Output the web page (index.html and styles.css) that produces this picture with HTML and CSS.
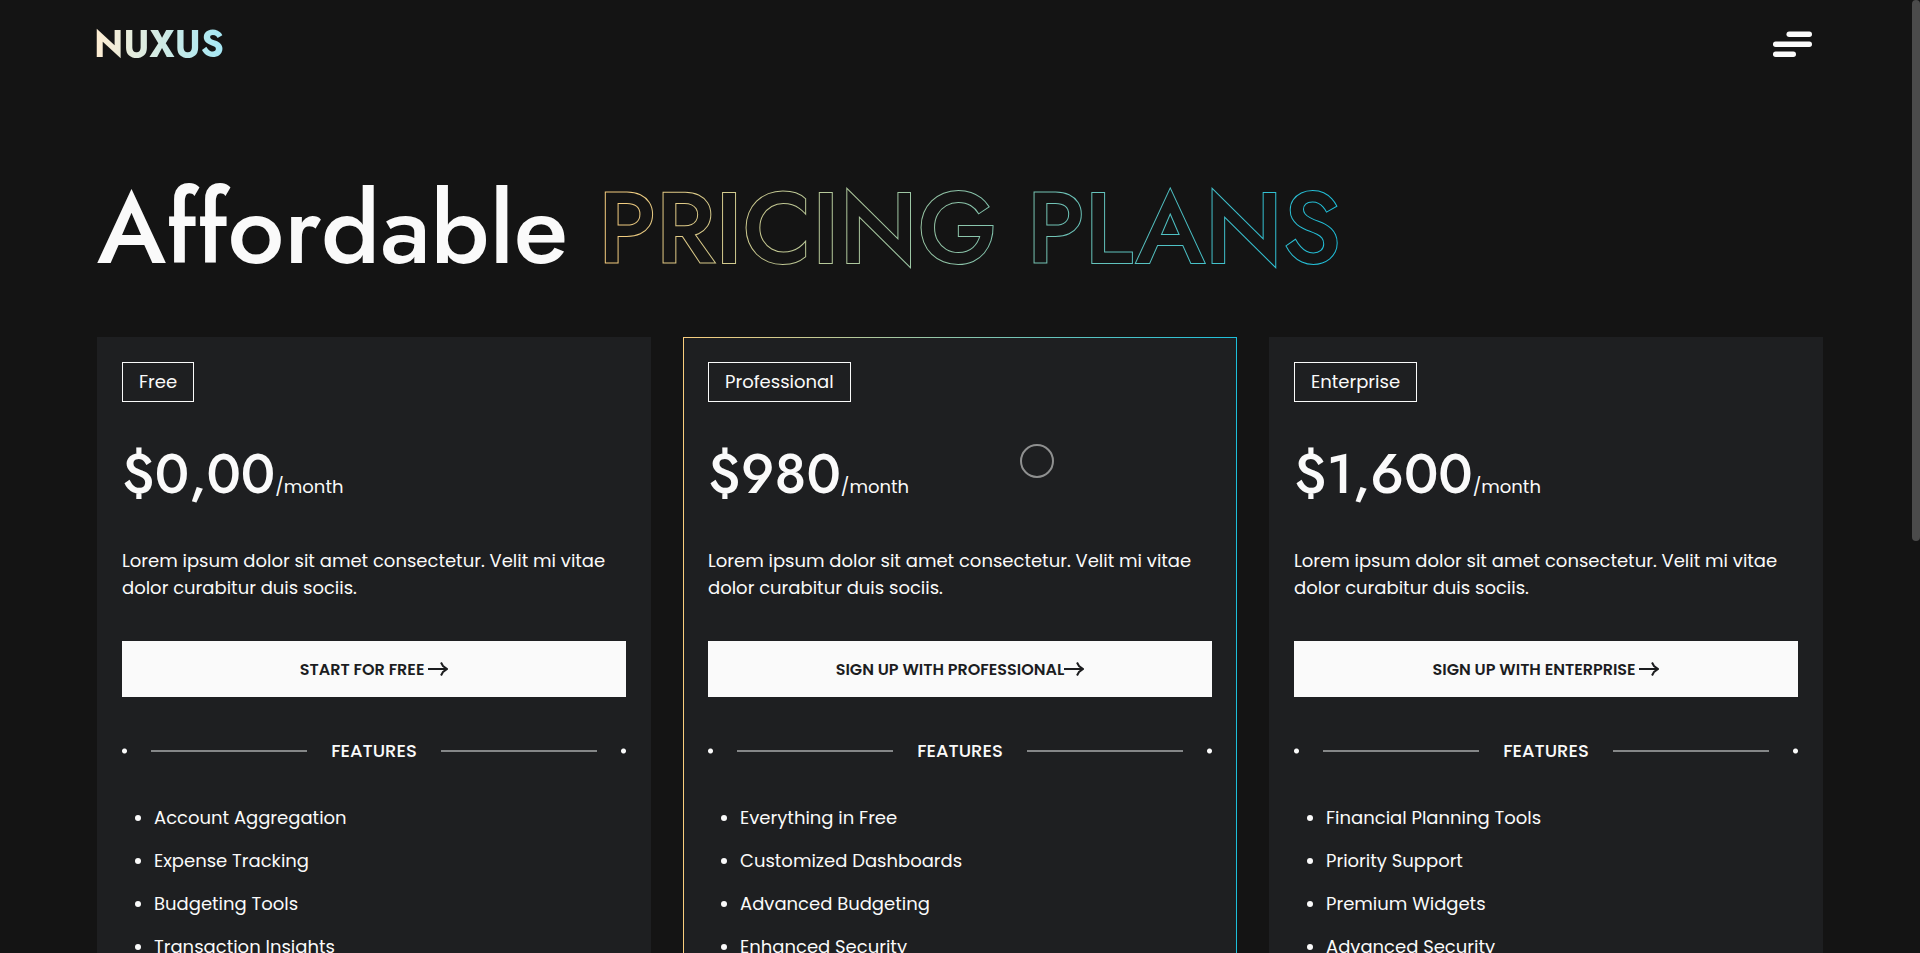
FILE: index.html
```html
<!DOCTYPE html>
<html lang="en">
<head>
<meta charset="utf-8">
<title>Nuxus – Pricing</title>
<link rel="stylesheet" href="styles.css">
</head>
<body>
<header class="header">
  <a class="logo" href="#">NUXUS</a>
  <button class="menu" type="button" aria-label="Open menu">
    <svg width="39" height="26" viewBox="0 0 39 26" aria-hidden="true">
      <rect x="13.500" y="0.500" width="25.500" height="5.500" rx="2.700"/>
      <rect x="0" y="10.500" width="39" height="5.500" rx="2.700"/>
      <rect x="0" y="20.500" width="23" height="5.500" rx="2.700"/>
    </svg>
  </button>
</header>

<main class="pricing">
  <h1 class="title">Affordable <span class="outline">PRICING PLANS</span></h1>
  <div class="plans">
    <section class="card">
      <h2 class="badge">Free</h2>
      <p class="price"><strong class="amount">$0,00</strong>/month</p>
      <p class="text">Lorem ipsum dolor sit amet consectetur. Velit mi vitae dolor curabitur duis sociis.</p>
      <a class="cta" href="#">START FOR FREE&nbsp;<svg class="arrow" viewBox="0 0 20 16" aria-hidden="true"><path d="M0 8H18M13 1.500L15 5L19 8L15 11L13 14.500"/></svg></a>
      <div class="divider"><span class="label">FEATURES</span></div>
      <ul class="features"><li>Account Aggregation</li><li>Expense Tracking</li><li>Budgeting Tools</li><li>Transaction Insights</li></ul>
    </section>
    <section class="card featured">
      <h2 class="badge">Professional</h2>
      <p class="price"><strong class="amount">$980</strong>/month</p>
      <p class="text">Lorem ipsum dolor sit amet consectetur. Velit mi vitae dolor curabitur duis sociis.</p>
      <a class="cta" href="#">SIGN UP WITH PROFESSIONAL<svg class="arrow" viewBox="0 0 20 16" aria-hidden="true"><path d="M0 8H18M13 1.500L15 5L19 8L15 11L13 14.500"/></svg></a>
      <div class="divider"><span class="label">FEATURES</span></div>
      <ul class="features"><li>Everything in Free</li><li>Customized Dashboards</li><li>Advanced Budgeting</li><li>Enhanced Security</li></ul>
    </section>
    <section class="card">
      <h2 class="badge">Enterprise</h2>
      <p class="price"><strong class="amount">$1,600</strong>/month</p>
      <p class="text">Lorem ipsum dolor sit amet consectetur. Velit mi vitae dolor curabitur duis sociis.</p>
      <a class="cta" href="#">SIGN UP WITH ENTERPRISE&nbsp;<svg class="arrow" viewBox="0 0 20 16" aria-hidden="true"><path d="M0 8H18M13 1.500L15 5L19 8L15 11L13 14.500"/></svg></a>
      <div class="divider"><span class="label">FEATURES</span></div>
      <ul class="features"><li>Financial Planning Tools</li><li>Priority Support</li><li>Premium Widgets</li><li>Advanced Security</li></ul>
    </section>
  </div>
</main>

<div class="cursor"></div>
<div class="scroll-thumb"></div>
</body>
</html>
```
FILE: styles.css
```css
:root {
  --bg: #141414;
  --panel: #1e1f21;
  --light: #fafafa;
  --sand: #f9cd7d;
  --aqua: #1dbfdb;
}
* { box-sizing: border-box; }
html { background: var(--bg); scrollbar-width: none; }
body {
  margin: 0;
  color: var(--light);
  font: 18px/27px Poppins, Inter, sans-serif;
}
h1, h2, p, ul { margin: 0; }
.header {
  display: flex;
  align-items: center;
  justify-content: space-between;
  height: 88px;
  padding: 0 108px 0 94px;
}
.logo {
  font: 700 37px/56px Jost, Lato, sans-serif;
  text-decoration: none;
  color: transparent;
  background: linear-gradient(90deg, #ffedd2, #a5e8f5);
  background-clip: text;
}
.menu {
  display: flex;
  padding: 0;
  border: 0;
  background: none;
  fill: var(--light);
}
.pricing { padding: 65px 97px 32px; }
.title {
  font: 500 100px/152px Jost, Lato, sans-serif;
  margin-bottom: 32px;
}
.outline {
  -webkit-text-fill-color: var(--bg);
  -webkit-text-stroke: 2px transparent;
  background: linear-gradient(90deg, var(--sand), var(--aqua));
  background-clip: text;
}
.plans {
  display: grid;
  grid-template-columns: repeat(3, 1fr);
  gap: 32px;
}
.card {
  display: flex;
  flex-direction: column;
  align-items: stretch;
  padding: 24px;
  border: 1px solid var(--panel);
  background: var(--panel);
}
.featured {
  border-image: linear-gradient(90deg, var(--sand), var(--aqua)) 1;
}
.badge {
  align-self: flex-start;
  padding: 0 16px;
  border: 1px solid var(--light);
  font-size: 18px;
  line-height: 38px;
  font-weight: 400;
}
.price { margin-top: 32px; line-height: 80px; }
.amount { font: 500 55px/80px Jost, Lato, sans-serif; }
.text { margin-top: 20px; }
.cta {
  display: flex;
  align-items: center;
  justify-content: center;
  height: 56px;
  margin-top: 40px;
  background: var(--light);
  color: #1c1d1f;
  font-size: 16px;
  font-weight: 600;
  text-decoration: none;
}
.arrow {
  width: 20px;
  height: 16px;
  fill: none;
  stroke: currentColor;
  stroke-width: 2;
}
.divider {
  display: flex;
  align-items: center;
  gap: 24px;
  margin-top: 40px;
}
.divider::before, .divider::after {
  content: "";
  flex: 1;
  height: 6px;
  background:
    radial-gradient(circle at 50% 50%, var(--light) 2px, transparent 3px) left / 5px 6px no-repeat,
    linear-gradient(#858788, #858788) right / calc(100% - 29px) 2px no-repeat;
}
.divider::after {
  background:
    radial-gradient(circle at 50% 50%, var(--light) 2px, transparent 3px) right / 5px 6px no-repeat,
    linear-gradient(#858788, #858788) left / calc(100% - 29px) 2px no-repeat;
}
.label { font-weight: 500; }
.features {
  display: flex;
  flex-direction: column;
  gap: 16px;
  margin-top: 40px;
  padding-left: 32px;
}
.cursor {
  position: fixed;
  left: 1020px;
  top: 444px;
  width: 34px;
  height: 34px;
  border: 2px solid #8f9090;
  border-radius: 50%;
  pointer-events: none;
}
.scroll-thumb {
  position: fixed;
  top: 0;
  right: 0;
  width: 8px;
  height: 541px;
  border-radius: 4px;
  background: #4b4b4b;
}
```
